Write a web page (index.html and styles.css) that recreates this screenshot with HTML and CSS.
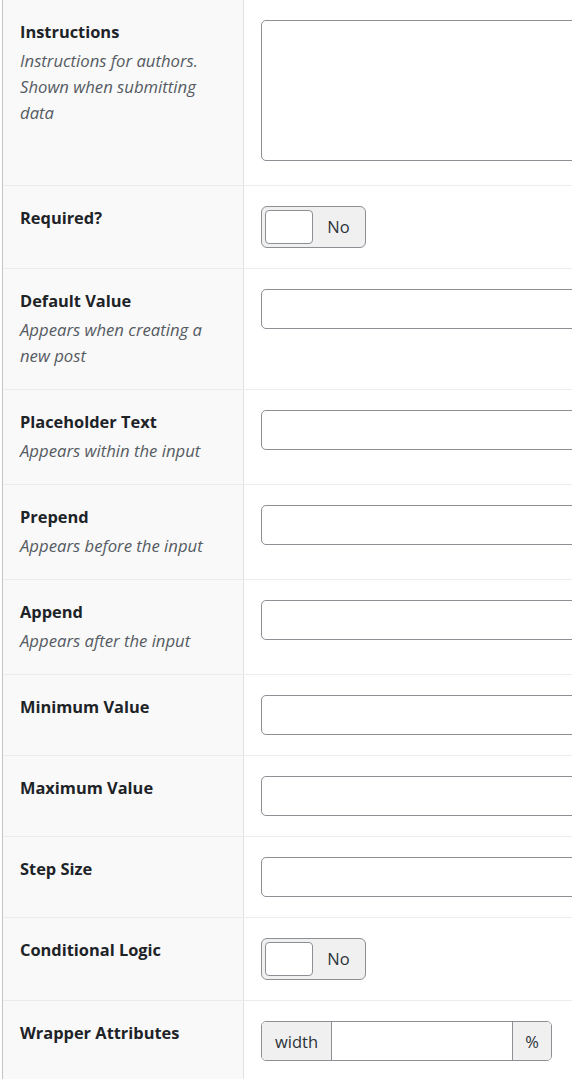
FILE: index.html
```html
<!DOCTYPE html>
<html lang="en">
<head>
<meta charset="utf-8">
<title>Field settings</title>
<link rel="stylesheet" href="styles.css">
</head>
<body>
<div class="settings">
  <div class="row">
    <div class="label"><div class="name">Instructions</div><div class="desc">Instructions for authors. Shown when submitting data</div></div>
    <div class="field"><textarea class="textarea"></textarea></div>
  </div>
  <div class="row">
    <div class="label"><div class="name">Required?</div></div>
    <div class="field"><div class="toggle"><span class="knob"></span><span class="toggle-text">No</span></div></div>
  </div>
  <div class="row">
    <div class="label"><div class="name">Default Value</div><div class="desc">Appears when creating a new post</div></div>
    <div class="field"><input class="text" type="text"></div>
  </div>
  <div class="row">
    <div class="label"><div class="name">Placeholder Text</div><div class="desc">Appears within the input</div></div>
    <div class="field"><input class="text" type="text"></div>
  </div>
  <div class="row">
    <div class="label"><div class="name">Prepend</div><div class="desc">Appears before the input</div></div>
    <div class="field"><input class="text" type="text"></div>
  </div>
  <div class="row">
    <div class="label"><div class="name">Append</div><div class="desc">Appears after the input</div></div>
    <div class="field"><input class="text" type="text"></div>
  </div>
  <div class="row">
    <div class="label"><div class="name">Minimum Value</div></div>
    <div class="field"><input class="text" type="text"></div>
  </div>
  <div class="row">
    <div class="label"><div class="name">Maximum Value</div></div>
    <div class="field"><input class="text" type="text"></div>
  </div>
  <div class="row">
    <div class="label"><div class="name">Step Size</div></div>
    <div class="field"><input class="text" type="text"></div>
  </div>
  <div class="row">
    <div class="label"><div class="name">Conditional Logic</div></div>
    <div class="field"><div class="toggle"><span class="knob"></span><span class="toggle-text">No</span></div></div>
  </div>
  <div class="row">
    <div class="label"><div class="name">Wrapper Attributes</div></div>
    <div class="field">
      <div class="group">
        <span class="addon addon-left">width</span>
        <input class="group-input" type="text">
        <span class="addon addon-right">%</span>
      </div>
    </div>
  </div>
</div>
</body>
</html>
```
FILE: styles.css
```css
html, body {
  margin: 0;
  padding: 0;
  background: #ffffff;
  overflow: hidden;
}
body {
  font-family: "Open Sans", "Noto Sans", sans-serif;
  color: #1d2327;
  height: 1079px;
}
.settings {
  margin-left: 2px;
  border-left: 1px solid #c3c4c7;
  width: 1160px;
  min-height: 1079px;
  background: linear-gradient(to right, #f9f9f9 0, #f9f9f9 240px, #ffffff 240px);
}
.row {
  display: flex;
  border-top: 1px solid #ececec;
}
.row:first-child {
  border-top: none;
}
.label {
  width: 200px;
  flex: 0 0 200px;
  padding: 20px 23px 20px 17px;
  background: #f9f9f9;
  border-right: 1px solid #e1e1e1;
}
.name {
  font-size: 16.4px;
  font-weight: 700;
  line-height: 24px;
  color: #1d2327;
}
.desc {
  margin-top: 4px;
  font-size: 16.7px;
  font-style: italic;
  line-height: 26px;
  color: #555b62;
}
.field {
  flex: 1;
  padding: 20px 17px 20px 17px;
}
.textarea {
  display: block;
  box-sizing: border-box;
  width: 860px;
  height: 141px;
  margin: 0 0 4px 0;
  border: 1px solid #8c8f94;
  border-radius: 5px;
  background: #fff;
  resize: none;
}
.text {
  display: block;
  box-sizing: border-box;
  width: 860px;
  height: 40px;
  margin: 0;
  border: 1px solid #8c8f94;
  border-radius: 5px;
  background: #fff;
}
.toggle {
  box-sizing: border-box;
  display: flex;
  align-items: center;
  width: 105px;
  height: 42px;
  padding: 3px;
  border: 1px solid #8c8f94;
  border-radius: 6px;
  background: #f0f0f1;
}
.knob {
  box-sizing: border-box;
  width: 48px;
  height: 34px;
  border: 1px solid #8c8f94;
  border-radius: 4px;
  background: #ffffff;
}
.toggle-text {
  flex: 1;
  text-align: center;
  font-size: 16.5px;
  line-height: 24px;
  color: #2c3338;
  padding-left: 2px;
}
.group {
  box-sizing: border-box;
  display: flex;
  width: 291px;
  height: 40px;
  border: 1px solid #8c8f94;
  border-radius: 5px;
  overflow: hidden;
  background: #fff;
}
.addon {
  display: flex;
  align-items: center;
  justify-content: center;
  background: #f0f0f1;
  font-size: 16.5px;
  color: #2c3338;
}
.addon-left {
  width: 69px;
  border-right: 1px solid #8c8f94;
}
.addon-right {
  width: 38px;
  border-left: 1px solid #8c8f94;
}
.group-input {
  flex: 1;
  min-width: 0;
  border: none;
  margin: 0;
  padding: 0;
  background: #fff;
}
```
